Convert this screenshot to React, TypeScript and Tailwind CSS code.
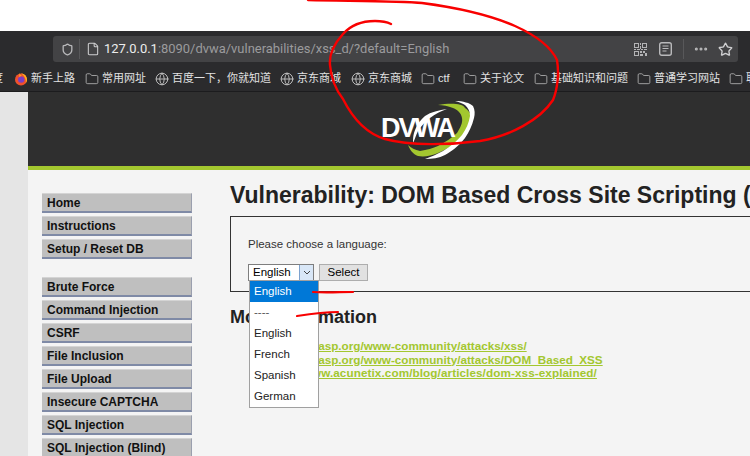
import React from 'react';
import { Ellipsis, File, Folder, Globe, Shield, Star } from 'lucide-react';

const cjk = "font-['Liberation_Sans','Noto_Sans_CJK_SC',sans-serif]";

const bookmarks = [
  { icon: 'fox', label: '新手上路', w: 'w-[71px]' },
  { icon: 'folder', label: '常用网址', w: 'w-[70px]' },
  { icon: 'globe', label: '百度一下，你就知道', w: 'w-[125px]' },
  { icon: 'globe', label: '京东商城', w: 'w-[71px]' },
  { icon: 'globe', label: '京东商城', w: 'w-[70px]' },
  { icon: 'folder', label: 'ctf', w: 'w-[42px]' },
  { icon: 'folder', label: '关于论文', w: 'w-[71px]' },
  { icon: 'folder', label: '基础知识和问题', w: 'w-[103px]' },
  { icon: 'folder', label: '普通学习网站', w: 'w-[92px]' },
  { icon: 'folder', label: '取证', w: 'w-[60px]' },
];

const menuTop = ['Home', 'Instructions', 'Setup / Reset DB'];
const menuVulns = [
  'Brute Force',
  'Command Injection',
  'CSRF',
  'File Inclusion',
  'File Upload',
  'Insecure CAPTCHA',
  'SQL Injection',
  'SQL Injection (Blind)',
];

function FoxIcon() {
  return (
    <svg viewBox="0 0 14 14" className="h-[14px] w-[14px] shrink-0">
      <circle cx="7" cy="7.6" r="6" fill="#f0512c" />
      <path d="M7 1.6c3.3 0 6 2.7 6 6 0 1.4-.5 2.6-1.2 3.6C12.4 7.4 10.6 3.6 7 1.6z" fill="#ffb11f" />
      <circle cx="7.2" cy="7.6" r="3.2" fill="#7b3fc4" />
      <path d="M5.6 0.8c.2 1.6 1 2.3 2.4 2.8L5 5z" fill="#ff9a1f" />
    </svg>
  );
}

function QrIcon() {
  return (
    <svg viewBox="0 0 13 13" className="h-[13px] w-[13px] text-[#b4b4b6]" fill="currentColor">
      <path d="M0 0h5v5H0zM1 1v3h3V1zM8 0h5v5H8zM9 1v3h3V1zM0 8h5v5H0zM1 9v3h3V9z" fillRule="evenodd" />
      <path d="M6 0h1v2H6zM6 3h1v3H6zM0 6h2v1H0zM3 6h3v1H3zM7 6h2v1H7zM10 6h3v1h-3zM6 8h2v2H6zM9 8h2v2H9zM11 10h2v3h-2zM6 11h3v2H6z" />
    </svg>
  );
}

function ReaderIcon() {
  return (
    <svg viewBox="0 0 13 14" className="h-[14px] w-[13px] text-[#b9b9bb]" fill="none" stroke="currentColor">
      <rect x="0.7" y="0.7" width="11.6" height="12.6" rx="2" strokeWidth="1.4" />
      <path d="M3.5 4h6M3.5 6.5h6M3.5 9h4" strokeWidth="1" />
    </svg>
  );
}

function MenuItem({ label }: { label: string }) {
  return (
    <div className="flex h-[20px] w-[150px] items-center border-t border-t-[#d4d4d4] border-r border-r-[#9a9fae] border-b-2 border-b-[#7f8aa6] bg-[#bfbfbf] pl-[5px] text-[12px] leading-none font-bold text-[#111]">
      {label}
    </div>
  );
}

export default function App() {
  return (
    <div className={`relative h-[456px] w-[750px] overflow-hidden bg-white ${cjk}`}>
      <div className="h-[31px]" />

      {/* browser toolbar */}
      <div className="h-[31px] bg-[#2b2b2d] pt-[5px] pr-[12px] pl-[53px]">
        <div className="flex h-[26px] items-center rounded-[3px] bg-[#434345] text-[#9b9b9d]">
          <Shield className="ml-[8px] h-[13px] w-[13px] text-[#b9b9bb]" strokeWidth={2.4} />
          <div className="ml-[5px] h-[20px] w-px bg-[#58585a]" />
          <File className="ml-[6px] h-[14px] w-[14px] text-[#cfcfd1]" strokeWidth={1.8} />
          <div className="ml-[4px] text-[12.95px] leading-none whitespace-nowrap font-['Roboto','Noto_Sans',sans-serif]">
            <span className="text-[#ececec]">127.0.0.1</span>:8090/dvwa/vulnerabilities/xss_d/?default=English
          </div>
          <div className="flex-1" />
          <QrIcon />
          <div className="ml-[12px]">
            <ReaderIcon />
          </div>
          <div className="ml-[11px] h-[20px] w-px bg-[#58585a]" />
          <Ellipsis className="ml-[9px] h-[16px] w-[16px] text-[#b9b9bb]" strokeWidth={2.6} />
          <Star className="mr-[5px] ml-[9px] h-[15px] w-[15px] text-[#cfcfd1]" strokeWidth={2.2} />
        </div>
      </div>

      {/* bookmarks bar */}
      <div className="flex h-[30px] items-center overflow-hidden border-b border-b-[#1c1c1e] bg-[#2b2b2d] pt-[4px] text-[11px] whitespace-nowrap text-[#e2e2e2]">
        <div className="-ml-[8px] w-[22px] shrink-0">度</div>
        {bookmarks.map((b, i) => (
          <div key={i} className={`flex shrink-0 items-center gap-[3px] ${b.w}`}>
            {b.icon === 'fox' && <FoxIcon />}
            {b.icon === 'folder' && <Folder className="h-[14px] w-[14px] shrink-0 text-[#b8b8b8]" strokeWidth={1.4} />}
            {b.icon === 'globe' && <Globe className="h-[14px] w-[14px] shrink-0 text-[#c4c4c4]" strokeWidth={1.6} />}
            <span>{b.label}</span>
          </div>
        ))}
      </div>

      {/* page */}
      <div className="flex h-[364px]">
        <div className="w-[28px] bg-[#e5e5e5]" />
        <div className="flex-1 overflow-hidden bg-[#f4f4f4] font-['Liberation_Sans',sans-serif]">
          <div className="box-content h-[74px] border-b-4 border-b-[#a3c72f] bg-[#2f2f2f] pt-0 pl-[353px]">
            <div className="relative top-[8px] h-[60px] w-[96px]">
              <svg viewBox="0 0 96 60" className="absolute inset-0 h-full w-full">
                <path d="M57 5C68 3 82 3 84 8C90 12 91 17 89 21C87 28 83 35 77 40C71 46 64 50 57 53C50 56 43 57 37 56C32 54 29 50 27 45C30 48 34 50 39 51C46 50 52 48 57 46C64 42 71 38 76 33C79 28 82 23 81 18C80 13 77 10 72 8C67 6 62 5 57 5z" fill="#a3c72f" />
                <path d="M74 1C82 1 89 3 92 6C94 10 94 14 93 18C91 26 88 32 84 38C78 46 71 51 64 55C58 58 51 59 44 59C50 57 56 54 62 51C70 46 76 41 81 35C85 29 88 23 89 16C89 11 87 8 84 5C81 3 78 2 74 1z" fill="#ffffff" />
                <path d="M66 9C58 10 50 12 44 16C38 21 35 27 33 33C32 36 32 40 32 43C34 39 35 35 37 31C40 26 44 22 49 18C54 14 60 11 66 9z" fill="#ffffff" />
              </svg>
              <span className="absolute top-[15px] left-0 text-[27px] leading-none font-bold tracking-[-2px] text-white">DVWA</span>
            </div>
          </div>

          <div className="flex">
            <div className="ml-[14px] flex w-[150px] shrink-0 flex-col pt-[23px]">
              <div className="flex flex-col gap-[3px]">
                {menuTop.map((m) => (
                  <MenuItem key={m} label={m} />
                ))}
              </div>
              <div className="mt-[18px] flex flex-col gap-[3px]">
                {menuVulns.map((m) => (
                  <MenuItem key={m} label={m} />
                ))}
              </div>
            </div>

            <div className="ml-[38px] min-w-0 flex-1 pt-[12px] whitespace-nowrap">
              <h1 className="text-[23px] leading-[27px] font-bold text-[#222]">Vulnerability: DOM Based Cross Site Scripting (DOM)</h1>
              <div className="mt-[7px] h-[76px] w-[600px] border border-[#333] pt-[20px] pl-[17px]">
                <p className="text-[11.5px] leading-[14px] text-[#333]">Please choose a language:</p>
                <div className="mt-[13px] flex items-start gap-[5px]">
                  <div className="flex h-[17px] w-[66px] items-center justify-between border border-[#7e7e7e] bg-white pl-[4px] text-[11.5px] text-black">
                    English
                    <span className="flex h-full w-[14px] items-center justify-center border-l border-[#7da2ce] bg-[#d9e7f7]">
                      <svg viewBox="0 0 8 5" className="h-[5px] w-[8px]">
                        <path d="M1 1l3 3 3-3" fill="none" stroke="#444" strokeWidth="1" />
                      </svg>
                    </span>
                  </div>
                  <div className="flex h-[17px] w-[49px] items-center justify-center border border-[#adadad] bg-[#e1e1e1] text-[11.5px] text-black">Select</div>
                </div>
              </div>
              <h2 className="mt-[14px] text-[18px] leading-[22px] font-bold text-[#222]">More Information</h2>
              <ul className="mt-[11px] pl-[33px] text-[11.7px] leading-[13.5px] font-bold text-[#a3c72f] underline">
                <li>https://owasp.org/www-community/attacks/xss/</li>
                <li>https://owasp.org/www-community/attacks/DOM_Based_XSS</li>
                <li className="tracking-[0.1px]">https://www.acunetix.com/blog/articles/dom-xss-explained/</li>
              </ul>
            </div>
          </div>
        </div>
      </div>

      {/* open select list */}
      <div className="absolute top-[280px] left-[249px] w-[70px] border border-[#a0a0a0] bg-white text-[11.5px] leading-none text-[#222]">
        <div className="flex h-[21px] items-center bg-[#0078d7] pl-[4px] text-white">English</div>
        <div className="flex h-[21px] items-center pl-[4px] text-[#555]">----</div>
        <div className="flex h-[21px] items-center pl-[4px]">English</div>
        <div className="flex h-[21px] items-center pl-[4px]">French</div>
        <div className="flex h-[21px] items-center pl-[4px]">Spanish</div>
        <div className="flex h-[21px] items-center pl-[4px]">German</div>
      </div>

      {/* red pen marks */}
      <svg viewBox="0 0 750 456" className="pointer-events-none absolute inset-0 h-full w-full" fill="none" stroke="#f80000" strokeLinecap="round">
        <path
          d="M391 24C385 21 380 21 375 21C360 21 350 26 343 34C334 44 329 55 330 65C331 78 336 90 343 99C352 117 365 133 385 139C410 146 450 145 480 141C510 136 540 120 553 100C558 88 559 72 557 60C550 45 535 35 515 26C490 15 460 8 422 3C400 1 350 1 308 0"
          strokeWidth="2.4"
        />
        <path d="M313 292C326 293 340 292 353 292" strokeWidth="2.2" />
        <path d="M297 316C310 314 325 312 338 312" strokeWidth="2.2" />
      </svg>
    </div>
  );
}
